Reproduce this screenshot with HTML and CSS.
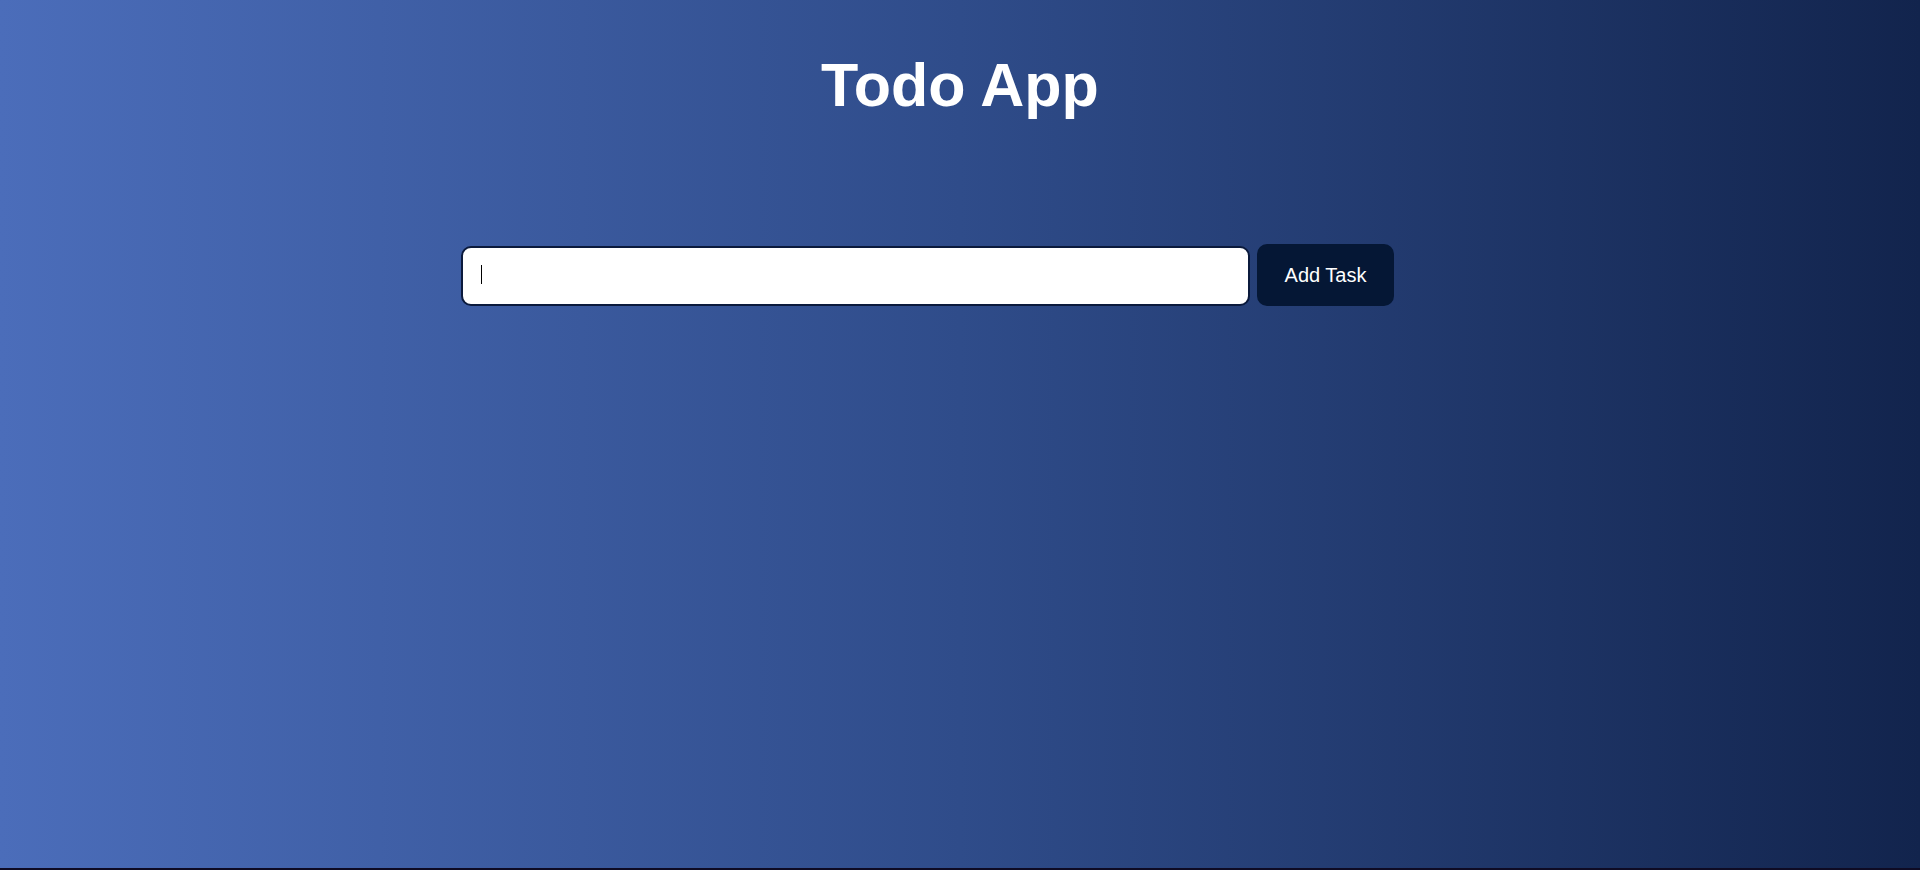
FILE: index.html
```html
<!DOCTYPE html>
<html lang="en">
<head>
<meta charset="utf-8">
<title>Todo App</title>
<link rel="stylesheet" href="styles.css">
</head>
<body>
<main class="app">
  <h1 class="title">Todo App</h1>
  <form class="task-form">
    <div class="input-wrap">
      <input class="task-input" type="text" autofocus>
      <span class="caret"></span>
    </div>
    <button class="add-btn" type="button">Add Task</button>
  </form>
</main>
</body>
</html>
```
FILE: styles.css
```css
html {
  margin: 0;
  padding: 0;
  background: #0e0b24;
  height: 100%;
}
body {
  margin: 0;
  height: 868px;
  background: linear-gradient(to right, #4b6dba 0%, #2f4c8a 50%, #12244d 100%);
  font-family: "Liberation Sans", Arial, sans-serif;
  color: #fff;
  overflow: hidden;
}
.app {
  display: flex;
  flex-direction: column;
  align-items: center;
}
.title {
  margin: 50px 0 0;
  font-size: 61px;
  font-weight: bold;
  line-height: 70px;
}
.task-form {
  width: 1000px;
  box-sizing: border-box;
  padding-left: 1px;
  margin-top: 124px;
  display: flex;
  align-items: flex-end;
  gap: 7px;
}
.input-wrap {
  position: relative;
  display: flex;
}
.task-input {
  width: 789px;
  height: 60px;
  box-sizing: border-box;
  border: 2px solid #0b1a3c;
  border-radius: 10px;
  background: #fff;
  padding: 0 19px;
  font-family: "Liberation Sans", Arial, sans-serif;
  font-size: 20px;
  outline: none;
  caret-color: transparent;
}
.caret {
  position: absolute;
  left: 20px;
  top: 19px;
  width: 1px;
  height: 19px;
  background: #000;
}
.add-btn {
  width: 137px;
  height: 62px;
  border: none;
  border-radius: 10px;
  background: #051735;
  color: #fff;
  font-family: "Liberation Sans", Arial, sans-serif;
  font-size: 20px;
  padding: 0;
}
```
